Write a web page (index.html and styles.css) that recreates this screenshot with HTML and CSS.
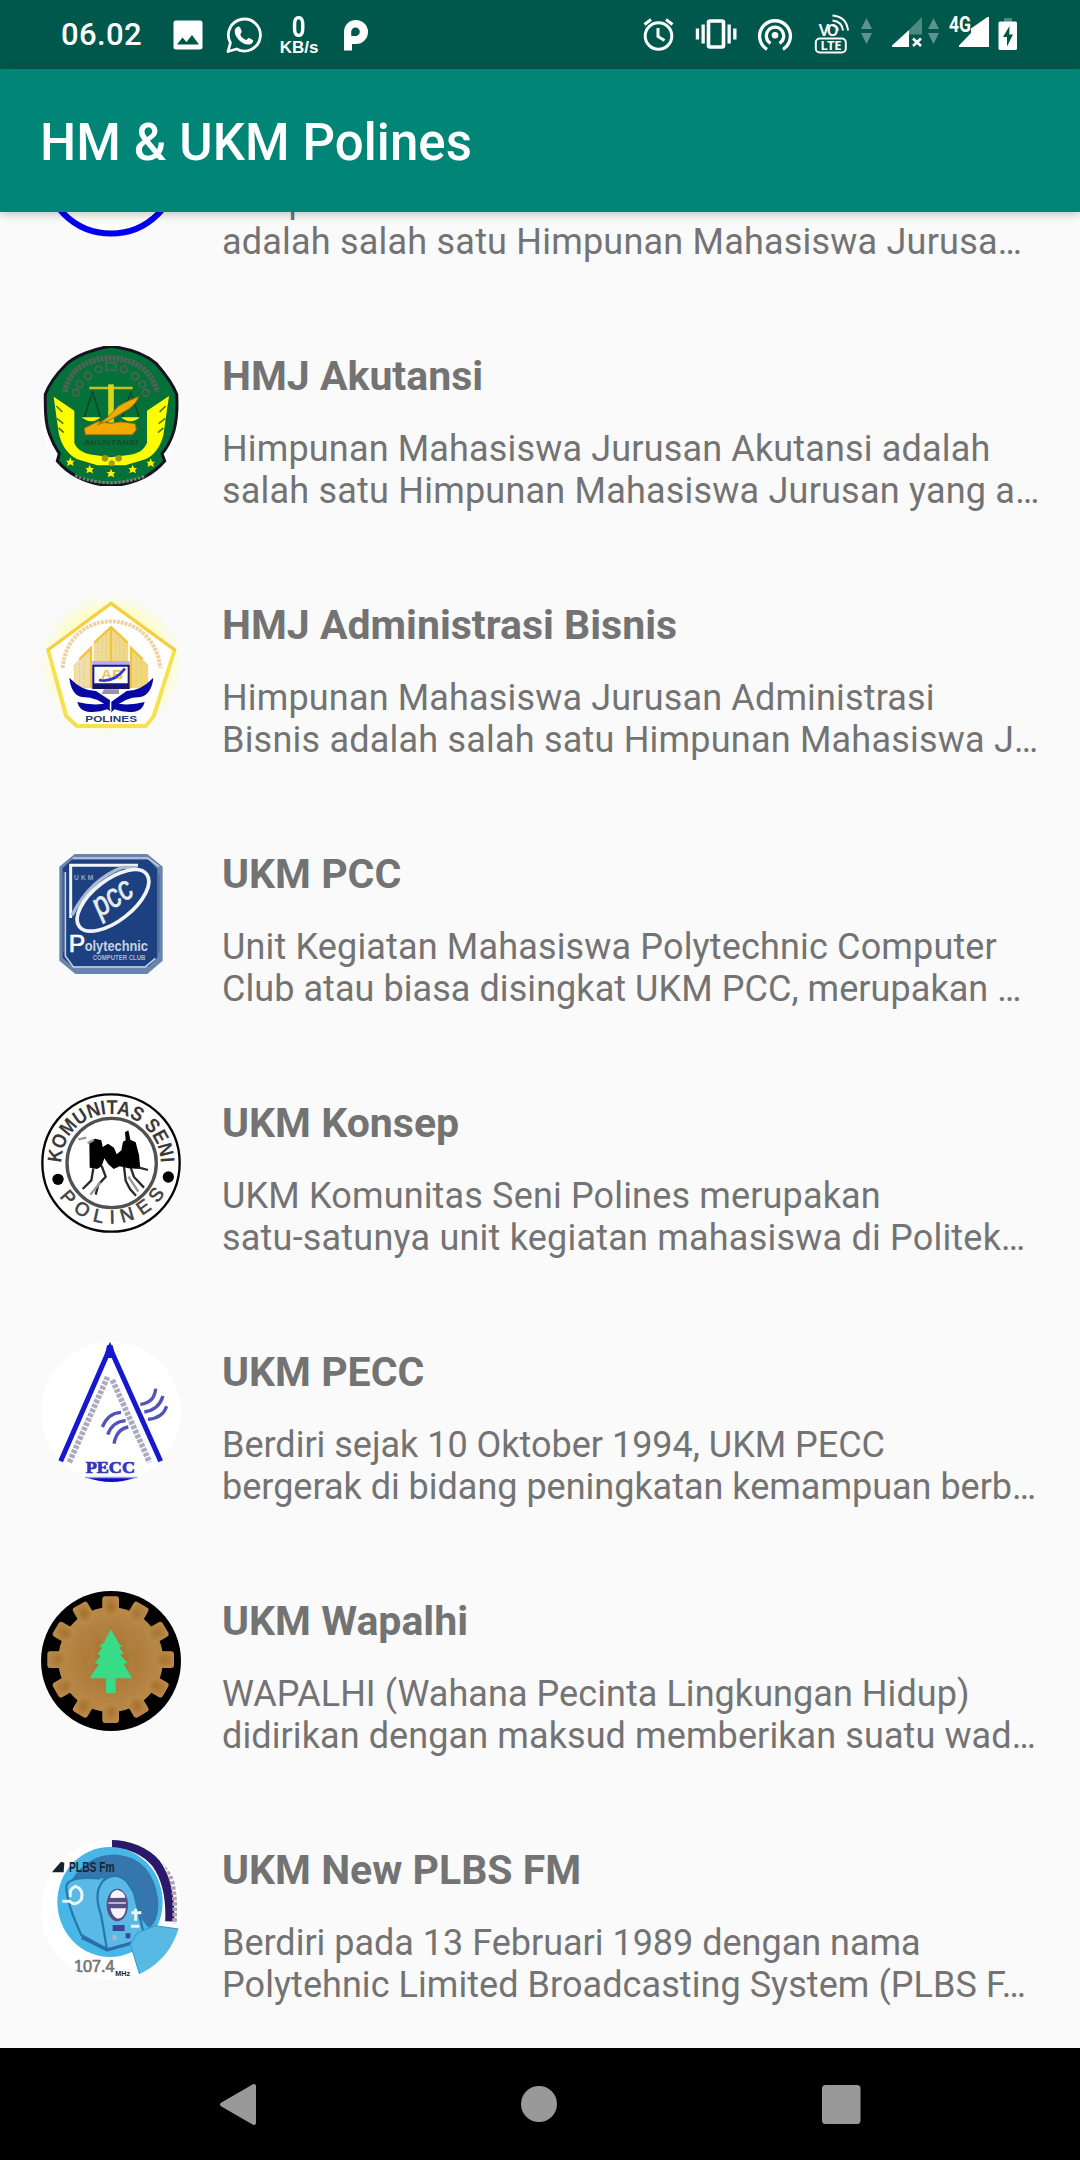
FILE: index.html
```html
<!DOCTYPE html>
<html lang="id">
<head>
<meta charset="utf-8">
<title>HM &amp; UKM Polines</title>
<link rel="stylesheet" href="styles.css">
</head>
<body>
<div class="screen">
  <header class="status">
    <div class="status-left">
      <span class="clock">06.02</span>
      <svg class="ic-image" width="30" height="30" viewBox="173 20 30 30"><path fill="#fff" fill-rule="evenodd" d="M176 20.500h24q2.500 0 2.500 2.500v24q0 2.500-2.500 2.500h-24q-2.500 0-2.500-2.500v-24q0-2.500 2.500-2.500zM177 44.500h22l-7-9.500-5.500 7-4-4.500z"/></svg>
      <svg class="ic-wa" width="38" height="38" viewBox="225 16 38 38"><path fill="none" stroke="#fff" stroke-width="2.800" stroke-linejoin="round" d="M228 51.500l2.400-8.700a16 16 0 1 1 6.200 6.200z"/><path fill="#fff" d="M236.500 27.500c2-2 3.500-1 4.200 1.200l1 2.800c.3 1-1.700 2.500-1.400 3.200 1.200 2.500 3.200 4.200 5.700 5.300.9.300 2-2.300 3.200-1.900l3.600 1.800c1.200.8-.5 3.600-2.300 4.300-7 2.300-16.200-6.700-15.800-13.200.1-1.400.8-2.500 1.800-3.500z"/></svg>
      <div class="speed"><span class="speed-num">0</span><span class="speed-unit">KB/s</span></div>
      <svg class="ic-p" width="26" height="32" viewBox="343 19 26 32"><path fill="#fff" fill-rule="evenodd" d="M344 50.500V31.500A11.800 11.800 0 0 1 356 20a12 12 0 0 1 0 24h-4v6.500zM352 36h3.500a4.300 4.300 0 1 0-4.300-4.300v3.500q0 .8.800.8z"/></svg>
    </div>
    <div class="status-right">
      <svg class="ic-alarm" width="32" height="34" viewBox="643 18 32 34"><g fill="none" stroke="#fff" stroke-width="3"><circle cx="658.500" cy="36" r="13.300"/><path d="M658 28v8.500l6.500 4M644.500 24.500l6.500-5M672.500 24.500l-6.500-5"/></g></svg>
      <svg class="ic-vib" width="42" height="32" viewBox="695 18 42 32"><rect x="708.500" y="21" width="15" height="26" rx="1.500" fill="none" stroke="#fff" stroke-width="3.600"/><path fill="#fff" d="M701.500 24.500h3.300v19h-3.300zM695.800 28.500h3.300v11h-3.300zM727.500 24.500h3.300v19h-3.300zM733.200 28.500h3.300v11h-3.300z"/></svg>
      <svg class="ic-hot" width="36" height="34" viewBox="757 18 36 34"><g fill="none" stroke="#fff" stroke-width="3.300"><path d="M767 49.300a15.400 15.400 0 1 1 16 0M770.500 43.300a8.700 8.700 0 1 1 9 0"/></g><circle cx="775" cy="35.200" r="3.300" fill="#fff"/></svg>
      <svg class="ic-volte" width="36" height="42" viewBox="814 13 36 42"><g fill="none" stroke="#fff"><rect x="815.800" y="38.500" width="30" height="14" rx="4" stroke-width="2"/><path stroke-width="2" d="M832.500 15.500q14 1 15.500 15M832.500 20.500q9.500 1 10.500 10M832.500 25.500q5 .5 5.500 5"/></g><text class="vo" x="818.500" y="35.500" textLength="20">VO</text><text class="lte" x="820.500" y="50" textLength="21">LTE</text></svg>
      <svg class="ic-arr1" width="12" height="28" viewBox="861 17 12 28"><path fill="#5d938a" d="M861 29l5.500-11 5.500 11zM861 33h11l-5.500 11z"/></svg>
      <svg class="ic-sig1" width="32" height="32" viewBox="891 16 32 32"><path fill="#4d8b82" d="M922 17v17.500h-13V30z"/><path fill="#fff" d="M892 47v-1.500L909 30v17z"/><path stroke="#fff" stroke-width="2.600" d="M913 38.500l8 7.500M921 38.500l-8 7.500"/></svg>
      <svg class="ic-arr2" width="12" height="28" viewBox="861 17 12 28"><path fill="#5d938a" d="M861 29l5.500-11 5.500 11zM861 33h11l-5.500 11z"/></svg>
      <svg class="ic-sig2" width="42" height="34" viewBox="948 15 42 34"><path fill="#fff" d="M959 47v-1.500l12-12.500v-4.500L987.500 17h1.500v30z"/><text class="g4" x="949" y="32" textLength="22" lengthAdjust="spacingAndGlyphs">4G</text></svg>
      <svg class="ic-bat" width="20" height="34" viewBox="998 17 20 34"><path fill="#4d8b82" d="M1004 18h8v4h-8z"/><path fill="#fff" fill-rule="evenodd" d="M1000 21.500h15.500q1.500 0 1.500 1.500v25.500q0 1.500-1.500 1.500H1000q-1.500 0-1.500-1.500V23q0-1.500 1.500-1.500zM1009.500 26l-6.500 11h4v9.500l6-12h-3.700z"/></svg>
    </div>
  </header>
  <div class="appbar"><h1 class="appbar-title">HM &amp; UKM Polines</h1></div>

  <main class="content">
    <ul class="list">
      <li class="row">
        <svg class="logo" viewBox="0 0 140 140"><circle cx="70" cy="70" r="66.500" fill="#fdfdf8" stroke="#0000f2" stroke-width="6"/></svg>
        <div class="info"><h2 class="name">HMJ Teknik Mesin</h2><p class="desc"><span class="ls-2">Himpunan Mahasiswa Jurusan Teknik Mesin</span><br><span class="ls-3">adalah salah satu Himpunan Mahasiswa Jurusa…</span></p></div>
      </li>
      <li class="row">
        <svg class="logo" viewBox="33 48 420 420">
          <circle cx="243" cy="258" r="210" fill="#fff"/>
          <path fill="#047238" stroke="#171222" stroke-width="9" d="M243 49C195 55 130 78 104 108 80 132 57 164 46 193q-2 85 12 118 12 33 30 60l-6 22q24 28 60 48 100 50 202 0 36-20 60-48l-8-22q24-28 36-70 12-46 8-108C428 160 404 130 378 100 345 72 290 55 243 49z"/>
          <g fill="none" stroke="#526158" stroke-width="10"><path stroke-width="17" stroke-dasharray="9 3" d="M105 186C125 50 355 50 381 186"/><g stroke-width="5"><circle cx="137" cy="188" r="10"/><circle cx="149" cy="163" r="10"/><circle cx="174" cy="138" r="11"/><circle cx="206" cy="118" r="10"/><path d="M229 98h28v22h-28z"/><circle cx="281" cy="118" r="10"/><circle cx="316" cy="138" r="11"/><circle cx="337" cy="163" r="10"/><circle cx="347" cy="188" r="10"/></g></g>
          <g fill="none" stroke="#123d28" stroke-width="4"><path d="M188 185l-26 78M188 185l23 78M302 185l-25 78M302 185l26 78"/></g>
          <path stroke="#c3c51d" stroke-width="8" d="M178 174h130"/><path stroke="#d9d51a" stroke-width="17" d="M243 163v115"/>
          <path fill="#fff500" d="M155 262h57q-28 24-57 0zM273 262h57q-28 24-57 0z"/>
          <path fill="#f2aa00" stroke="#a5750a" stroke-width="3" d="M326 200q-10 28-47 47l-42 25-34 12 30-22 33-34q28-16 60-28zM163 295l40-20 38 5 32-4 42 5 4 18-12 15H166z"/>
          <path fill="#ffff00" d="M71 200l62 42v98q15 32 65 36l45 6 46-6q50-5 62-38v-96l66-44-17 118q-15 55-54 72l-60 18h-84l-60-18Q98 365 86 308z"/>
          <path fill="none" stroke="#567b19" stroke-width="5" d="M79 228l18 18M80 265l20 16M86 294l16 14M407 228l-18 18M406 265l-20 16M400 294l-16 14"/>
          <g fill="#9c9b16"><circle cx="225" cy="385" r="10"/><circle cx="245" cy="400" r="9"/><circle cx="266" cy="385" r="10"/></g>
          <g fill="#fff200"><path id="st" d="M121 382l4 10h9l-6 6 3 10-10-5-10 5 3-10-6-6h9z"/><use href="#st" x="58" y="22"/><use href="#st" x="122" y="34"/><use href="#st" x="187" y="22"/><use href="#st" x="241" y="3"/></g>
          <text x="162" y="346" class="lg-ak" textLength="162" lengthAdjust="spacingAndGlyphs">AKUNTANSI</text>
          <path fill="none" stroke="#708574" stroke-width="9" stroke-dasharray="8 4" d="M135 437q108 42 212 0"/>
        </svg>
        <div class="info"><h2 class="name">HMJ Akutansi</h2><p class="desc"><span class="ls-2">Himpunan Mahasiswa Jurusan Akutansi adalah</span><br><span class="ls-3">salah satu Himpunan Mahasiswa Jurusan yang a…</span></p></div>
      </li>
      <li class="row">
        <svg class="logo" viewBox="33 45 420 420">
          <defs><radialGradient id="halo"><stop offset=".75" stop-color="#ffffc6"/><stop offset="1" stop-color="#fafaf6"/></radialGradient><linearGradient id="leaf"><stop offset="0" stop-color="#efe0b4"/><stop offset="1" stop-color="#f1d575"/></linearGradient></defs>
          <circle cx="243" cy="255" r="210" fill="url(#halo)"/>
          <path fill="#fff" stroke="#f6cf42" stroke-width="10" d="M243 70L54 210l54 198 32 30h208l24-30 62-198z"/>
          <path fill="none" stroke="#f6e34c" stroke-width="10" d="M56 214l54 194 32 30h206l22-30 62-194"/>
          <path fill="none" stroke="#f0d2a0" stroke-width="12" stroke-dasharray="9 3" d="M98 264C112 80 370 75 391 264"/>
          <path fill="url(#leaf)" stroke="#eed383" stroke-width="3" d="M243 138l50 50v55H193v-55zM183 203v120h-48l-3-66zM303 203l50 52v68h-50z"/>
          <path fill="none" stroke="#d9bd78" stroke-width="2" stroke-dasharray="5 5" d="M205 185v55M217 172v68M229 160v80M257 160v80M269 172v68M281 185v55M148 250v70M162 235v85M318 230v90M334 245v75"/>
          <path fill="none" stroke="#f5c339" stroke-width="7" d="M193 188l50-47 50 47M243 142v100M148 238l35-34v120M303 324V204l35 34"/>
          <path fill="#bca9f5" d="M187 243h112v84H187z"/><path fill="#f6fbff" stroke="#19197c" stroke-width="6" d="M190 257h106v56H190z"/><path fill="#15156b" d="M187 314h112v13H187z"/><path fill="#9a91a5" d="M222 328h45v14h-52z"/>
          <text x="213" y="296" class="lg-ab" textLength="67" lengthAdjust="spacingAndGlyphs">AB</text><path fill="none" stroke="#3635cd" stroke-width="8" d="M207 300q44 10 78-34"/>
          <path fill="#0707a4" d="M118 293q38 40 80 40l42 28-1 25q-35-36-84-35-32-8-37-58zM370 293q-38 40-80 40l-46 32v26q38-40 87-40 34-8 39-58zM142 366q45 12 92 4l8 24-10-6q-25 10-60 7-24-4-30-29zM344 366q-45 12-90 4l-12 28 12-10q25 10 60 7 24-4 30-29z"/>
          <text x="166" y="426" class="lg-pol" textLength="155" lengthAdjust="spacingAndGlyphs">POLINES</text>
        </svg>
        <div class="info"><h2 class="name">HMJ Administrasi Bisnis</h2><p class="desc"><span class="ls-2">Himpunan Mahasiswa Jurusan Administrasi</span><br><span class="ls-3">Bisnis adalah salah satu Himpunan Mahasiswa J…</span></p></div>
      </li>
      <li class="row">
        <svg class="logo" viewBox="33 42 420 420">
          <path fill="#6984ad" d="M134 72h218l46 38v282l-46 40H136l-48-40V110z"/>
          <path fill="#1c4080" d="M126 89h230l26 28v266l-26 26H126l-28-26V115z"/>
          <path fill="none" stroke="#c3d0e0" stroke-width="5" d="M128 84h225l34 26M106 126v252l24 33h216l30-26"/>
          <path fill="none" stroke="#52739f" stroke-width="6" d="M98 128v238M386 132v236"/>
          <path fill="none" stroke="#f3f5f6" stroke-width="9" d="M122 264V106h202"/>
          <g fill="none" stroke="#f1f4f3" stroke-width="11"><path stroke="#a8bad1" stroke-width="10" d="M126 256q55-108 151-144h45"/><ellipse cx="249" cy="211" rx="128" ry="61" transform="rotate(-38 249 211)"/></g>
          <text class="lg-pcc" x="-60" y="26" transform="translate(246 208) rotate(-33)" textLength="128" lengthAdjust="spacingAndGlyphs">pcc</text>
          <text x="132" y="149" class="lg-ukm" textLength="58">UKM</text>
          <text x="116" y="365" class="lg-p">P</text><text x="164" y="363" class="lg-poly" textLength="190" lengthAdjust="spacingAndGlyphs">olytechnic</text>
          <text x="188" y="389" class="lg-cc" textLength="158" lengthAdjust="spacingAndGlyphs">COMPUTER CLUB</text>
        </svg>
        <div class="info"><h2 class="name">UKM PCC</h2><p class="desc"><span class="ls-2">Unit Kegiatan Mahasiswa Polytechnic Computer</span><br><span class="ls-1">Club atau biasa disingkat UKM PCC, merupakan …</span></p></div>
      </li>
      <li class="row">
        <svg class="logo" viewBox="33 39 420 420">
          <defs><path id="kTop" d="M94 251A149 149 0 0 1 392 251"/><path id="kBot" d="M57 270A188 188 0 0 0 429 270"/></defs>
          <circle cx="243" cy="249" r="206" fill="#fff" stroke="#050505" stroke-width="7"/><circle cx="245" cy="249" r="134" fill="#fff" stroke="#515151" stroke-width="10"/>
          <text class="lg-kon"><textPath href="#kTop" textLength="463" startOffset="2" lengthAdjust="spacingAndGlyphs">KOMUNITAS SENI</textPath></text>
          <text class="lg-kon lg-kon2"><textPath href="#kBot" textLength="375" startOffset="86">POLINES</textPath></text>
          <circle cx="84" cy="298" r="17"/><circle cx="415" cy="291" r="17"/>
          <path d="M178 184l18-8 18 5 4 20 16-10 18 12 8 20 14-12 5-26 8-4-2-24 10-6 6 28 16 8 10 38 4 42-36-2-26-6-18 8-16-14-12-18-8 24-14 8-22-4z"/>
          <g fill="none" stroke="#292929" stroke-width="7"><path d="M215 258l12 32-22 24-8 30M190 265l-6 36-26 26M282 260l5 42 13 25 18 20M302 263l10 28 30 32M325 262l29 8"/><path stroke="#9a9a9a" d="M145 178l24-5M173 190l18-10M181 344l30-37M325 335l-30-45"/></g>
        </svg>
        <div class="info"><h2 class="name">UKM Konsep</h2><p class="desc"><span class="ls-2">UKM Komunitas Seni Polines merupakan</span><br><span class="ls-3">satu-satunya unit kegiatan mahasiswa di Politek…</span></p></div>
      </li>
      <li class="row">
        <svg class="logo" viewBox="33 36 420 420">
          <circle cx="243" cy="246" r="210" fill="#fff"/>
          <path fill="none" stroke="#1717ce" stroke-width="15" d="M92 394L240 54l152 340"/><path fill="#1717ce" d="M231 46h17l9 38h-34z"/>
          <g fill="none" stroke="#aaaac1" stroke-width="17"><path stroke-dasharray="11 4" d="M118 397L234 138"/><path stroke-dasharray="11 4" d="M247 150l112 247"/></g>
          <g fill="none" stroke="#5353b9" stroke-width="10"><path d="M217 291q17-42 56-44M233 314q15-40 54-42M252 341q8-44 43-50M331 223q42-4 46-47M343 246q44-7 56-48M354 268q44-3 56-39"/></g>
          <text x="167" y="429" class="lg-pecc" textLength="148" lengthAdjust="spacingAndGlyphs">PECC</text>
          <path fill="#0c0ccf" d="M166 442h154q-75 28-154 0z"/><path fill="#9c9de1" d="M165 440h157v5H165z"/>
        </svg>
        <div class="info"><h2 class="name">UKM PECC</h2><p class="desc"><span class="ls-0">Berdiri sejak 10 Oktober 1994, UKM PECC</span><br><span class="ls-0">bergerak di bidang peningkatan kemampuan berb…</span></p></div>
      </li>
      <li class="row">
        <svg class="logo" viewBox="33 33 420 420">
          <defs><radialGradient id="wood"><stop offset="0" stop-color="#a5702d"/><stop offset=".5" stop-color="#b07b38"/><stop offset="1" stop-color="#bb8949"/></radialGradient>
          <filter id="grain" x="0" y="0" width="1" height="1"><feTurbulence type="fractalNoise" baseFrequency=".035 .014" numOctaves="3" seed="4"/><feColorMatrix values="0 0 0 0 .42  0 0 0 0 .24  0 0 0 0 .06  0 1.400 0 0 -.55"/><feComposite in2="SourceGraphic" operator="in"/></filter></defs>
          <circle cx="243" cy="243" r="210"/>
          <g id="gear" fill="url(#wood)"><circle cx="242" cy="239" r="157"/><g id="t6"><g id="t2"><rect id="tooth" x="217" y="49" width="50" height="60" rx="9"/><use href="#tooth" transform="rotate(180 242 239)"/></g><use href="#t2" transform="rotate(30 242 239)"/><use href="#t2" transform="rotate(60 242 239)"/></g><use href="#t6" transform="rotate(90 242 239)"/></g>
          <use href="#gear" filter="url(#grain)"/>
          <path fill="#37db88" d="M242 148l26 44 8 7-9 4 15 17-11 5 22 24-12 2 25 44h-49v45h-29v-45h-49l27-42-12-4 18-22-10-5 14-18-9-6 15-10z"/>
        </svg>
        <div class="info"><h2 class="name">UKM Wapalhi</h2><p class="desc"><span class="ls-1">WAPALHI (Wahana Pecinta Lingkungan Hidup)</span><br><span class="ls-1b">didirikan dengan maksud memberikan suatu wad…</span></p></div>
      </li>
      <li class="row">
        <svg class="logo" viewBox="33 30 420 420">
          <defs><clipPath id="round"><circle cx="243" cy="240" r="210"/></clipPath></defs>
          <g clip-path="url(#round)"><path fill="#fff" d="M33 30h420v420H33z"/>
          <path fill="none" stroke="#291968" stroke-width="27" d="M246 42q80-2 132 58 46 64 41 174"/>
          <path fill="none" stroke="#b5a1b2" stroke-width="14" stroke-dasharray="11 5" d="M403 94q38 62 30 188"/>
          <ellipse cx="240" cy="216" rx="158" ry="165" fill="#48b7e8"/>
          <path fill="#3676ae" d="M125 150q50-80 138-76 104 10 122 136 2 65-28 84l-67-78-30-70-85-2z"/>
          <path fill="#5bb9e5" stroke="#277aaf" stroke-width="7" d="M211 145q-98-8-102 24 0 50 45 146l78 43 80-20 28-32-28-118-20-32q-34-34-70-6-34 34-9 104l18 104"/>
          <path fill="none" stroke="#296faa" stroke-width="10" d="M155 322l77 38 94-27"/>
          <path fill="#58b9e5" stroke="#2d9acc" stroke-width="3" d="M301 343l20-34 55-22 70 10-8 60-105 90z"/>
          <ellipse cx="262" cy="225" rx="32" ry="49" fill="#574d87"/><path fill="#f5f5f8" d="M241 204q0-20 20-25 23 5 25 24zM241 235h47q-5 31-25 31-16-4-22-31z"/>
          <path stroke="#ddd9ec" stroke-width="4" d="M235 219h53"/>
          <g fill="none" stroke="#e5f6fb" stroke-width="9"><path d="M97 214h22q18 16 35-5 8-32-18-40-20 8-14 32M317 236v36M304 248h30M303 289h25"/></g><path fill="#3d4595" d="M248 285h36v18h-36zM287 310h14v15h-14z"/><path fill="#a4b8cc" d="M247 316h13v15h-13z"/>
          <path d="M65 127l28-32 10 3-2 29z" fill="#19202d"/>
          <text x="117" y="125" class="lg-pl" textLength="137" lengthAdjust="spacingAndGlyphs">PLBS Fm</text>
          <text x="132" y="427" class="lg-107" textLength="122" lengthAdjust="spacingAndGlyphs">107.4</text><text x="256" y="438" class="lg-mhz" textLength="44" lengthAdjust="spacingAndGlyphs">MHz</text></g>
        </svg>
        <div class="info"><h2 class="name">UKM New PLBS FM</h2><p class="desc"><span class="ls-0">Berdiri pada 13 Februari 1989 dengan nama</span><br><span class="ls-1">Polytehnic Limited Broadcasting System (PLBS F…</span></p></div>
      </li>
    </ul>
  </main>
  <nav class="nav">
    <svg width="38" height="44" viewBox="219 2082 38 44"><path fill="#999" stroke="#999" stroke-width="4" stroke-linejoin="round" d="M222 2104.500l32-18.500v37z"/></svg>
    <svg width="38" height="44" viewBox="521 2082 38 44"><circle cx="540" cy="2104" r="18" fill="#999"/></svg>
    <svg width="40" height="44" viewBox="820 2082 40 44"><rect x="821" y="2085" width="38.500" height="39" rx="3.500" fill="#999"/></svg>
  </nav>
</div>
</body>
</html>
```
FILE: styles.css
```css
* { box-sizing: border-box; }
body { margin: 0; font-family: Roboto, "Liberation Sans", sans-serif; background: #fafafa; }
svg { display: block; flex: none; }
.screen { width: 1080px; height: 2160px; display: flex; flex-direction: column; overflow: hidden; }

/* status bar */
.status { height: 69px; background: #00574b; display: flex; justify-content: space-between; padding: 0 62px 0 61px; flex: none; color: #fff; }
.status-left, .status-right { display: flex; align-items: flex-start; }
.clock { width: 112px; font-size: 31px; line-height: 36px; font-weight: 500; letter-spacing: .4px; padding-top: 17px; }
.ic-image { margin-top: 20px; }
.ic-wa { margin: 16px 0 0 22px; }
.speed { width: 42px; margin: 13px 0 0 15px; display: flex; flex-direction: column; align-items: center; font-weight: 700; }
.speed-num { font-size: 30px; line-height: 28px; transform: scaleX(.8); }
.speed-unit { font: 700 17px/14px "Liberation Sans", sans-serif; }
.ic-p { margin: 19px 0 0 23px; }
.ic-alarm { margin-top: 18px; }
.ic-vib { margin: 18px 0 0 20px; }
.ic-hot { margin: 18px 0 0 20px; }
.ic-volte { margin: 13px 0 0 21px; }
.ic-arr1 { margin: 17px 0 0 11px; }
.ic-sig1 { margin: 16px 0 0 18px; }
.ic-arr2 { margin: 17px 0 0 5px; }
.ic-sig2 { margin: 15px 0 0 8px; }
.ic-bat { margin: 17px 0 0 8px; }
.vo { font: 500 17px Roboto, sans-serif; fill: #fff; }
.lte { font: 700 13px "Noto Sans", sans-serif; fill: #fff; }
.g4 { font: 700 22px Roboto, sans-serif; fill: #fff; }

/* app bar */
.appbar { height: 143px; background: #008577; flex: none; display: flex; align-items: center; padding: 4px 0 0 40px; z-index: 1; box-shadow: 0 2px 9px rgba(0,0,0,.24); }
.appbar-title { margin: 0; color: #fff; font-size: 51px; line-height: 60px; font-weight: 500; letter-spacing: .08px; }

/* list */
.content { height: 1836px; flex: none; overflow: hidden; background: #fafafa; }
.list { list-style: none; margin: -115px 0 0; padding: 0; }
.row { height: 249px; display: flex; padding-left: 41px; }
.logo { width: 140px; height: 140px; }
.info { margin-left: 41px; padding-top: 5px; color: #737373; white-space: nowrap; }
.name { margin: 0; font-size: 41px; line-height: 50px; font-weight: 700; }
.desc { margin: 27px 0 0; font-size: 36px; line-height: 42px; }
.ls-0 { letter-spacing: -.01px; }
.ls-1 { letter-spacing: .06px; }
.ls-1b { letter-spacing: .1px; }
.ls-2 { letter-spacing: .16px; }
.ls-3 { letter-spacing: .21px; }

/* lettering inside the logos */
.lg-ak { font: 700 22px "Liberation Sans", sans-serif; fill: #18492f; }
.lg-ab { font: 700 36px "Liberation Sans", sans-serif; fill: #f2c44c; }
.lg-pol { font: 700 25px "Liberation Sans", sans-serif; fill: #263877; }
.lg-pcc { font: italic 400 100px "Liberation Sans", sans-serif; fill: #e8edf0; stroke: #e8edf0; stroke-width: 2px; }
.lg-ukm { font: 700 20px "Liberation Sans", sans-serif; fill: #91a9c4; }
.lg-p { font: 400 74px "Liberation Sans", sans-serif; fill: #fff; stroke: #fff; stroke-width: 2px; }
.lg-poly { font: 700 42px "Liberation Sans", sans-serif; fill: #c6d3e0; }
.lg-cc { font: 700 23px "Liberation Sans", sans-serif; fill: #a9b9ce; }
.lg-kon { font: 700 60px "Liberation Sans", sans-serif; fill: #3a3a3a; }
.lg-kon2 { font-size: 56px; font-weight: 400; fill: #444; stroke: #444; stroke-width: 2px; }
.lg-pecc { font: 700 47px "Liberation Serif", serif; fill: #3434bd; stroke: #3434bd; stroke-width: 2px; }
.lg-pl { font: 700 44px "Liberation Sans", sans-serif; fill: #172533; }
.lg-107 { font: 400 47px "Liberation Sans", sans-serif; fill: #777; stroke: #777; stroke-width: 2px; }
.lg-mhz { font: 700 20px "Liberation Sans", sans-serif; fill: #222; }

/* navigation bar */
.nav { height: 112px; background: #000; display: flex; justify-content: space-between; align-items: flex-start; padding: 34px 219px 0 219px; flex: none; }
```
